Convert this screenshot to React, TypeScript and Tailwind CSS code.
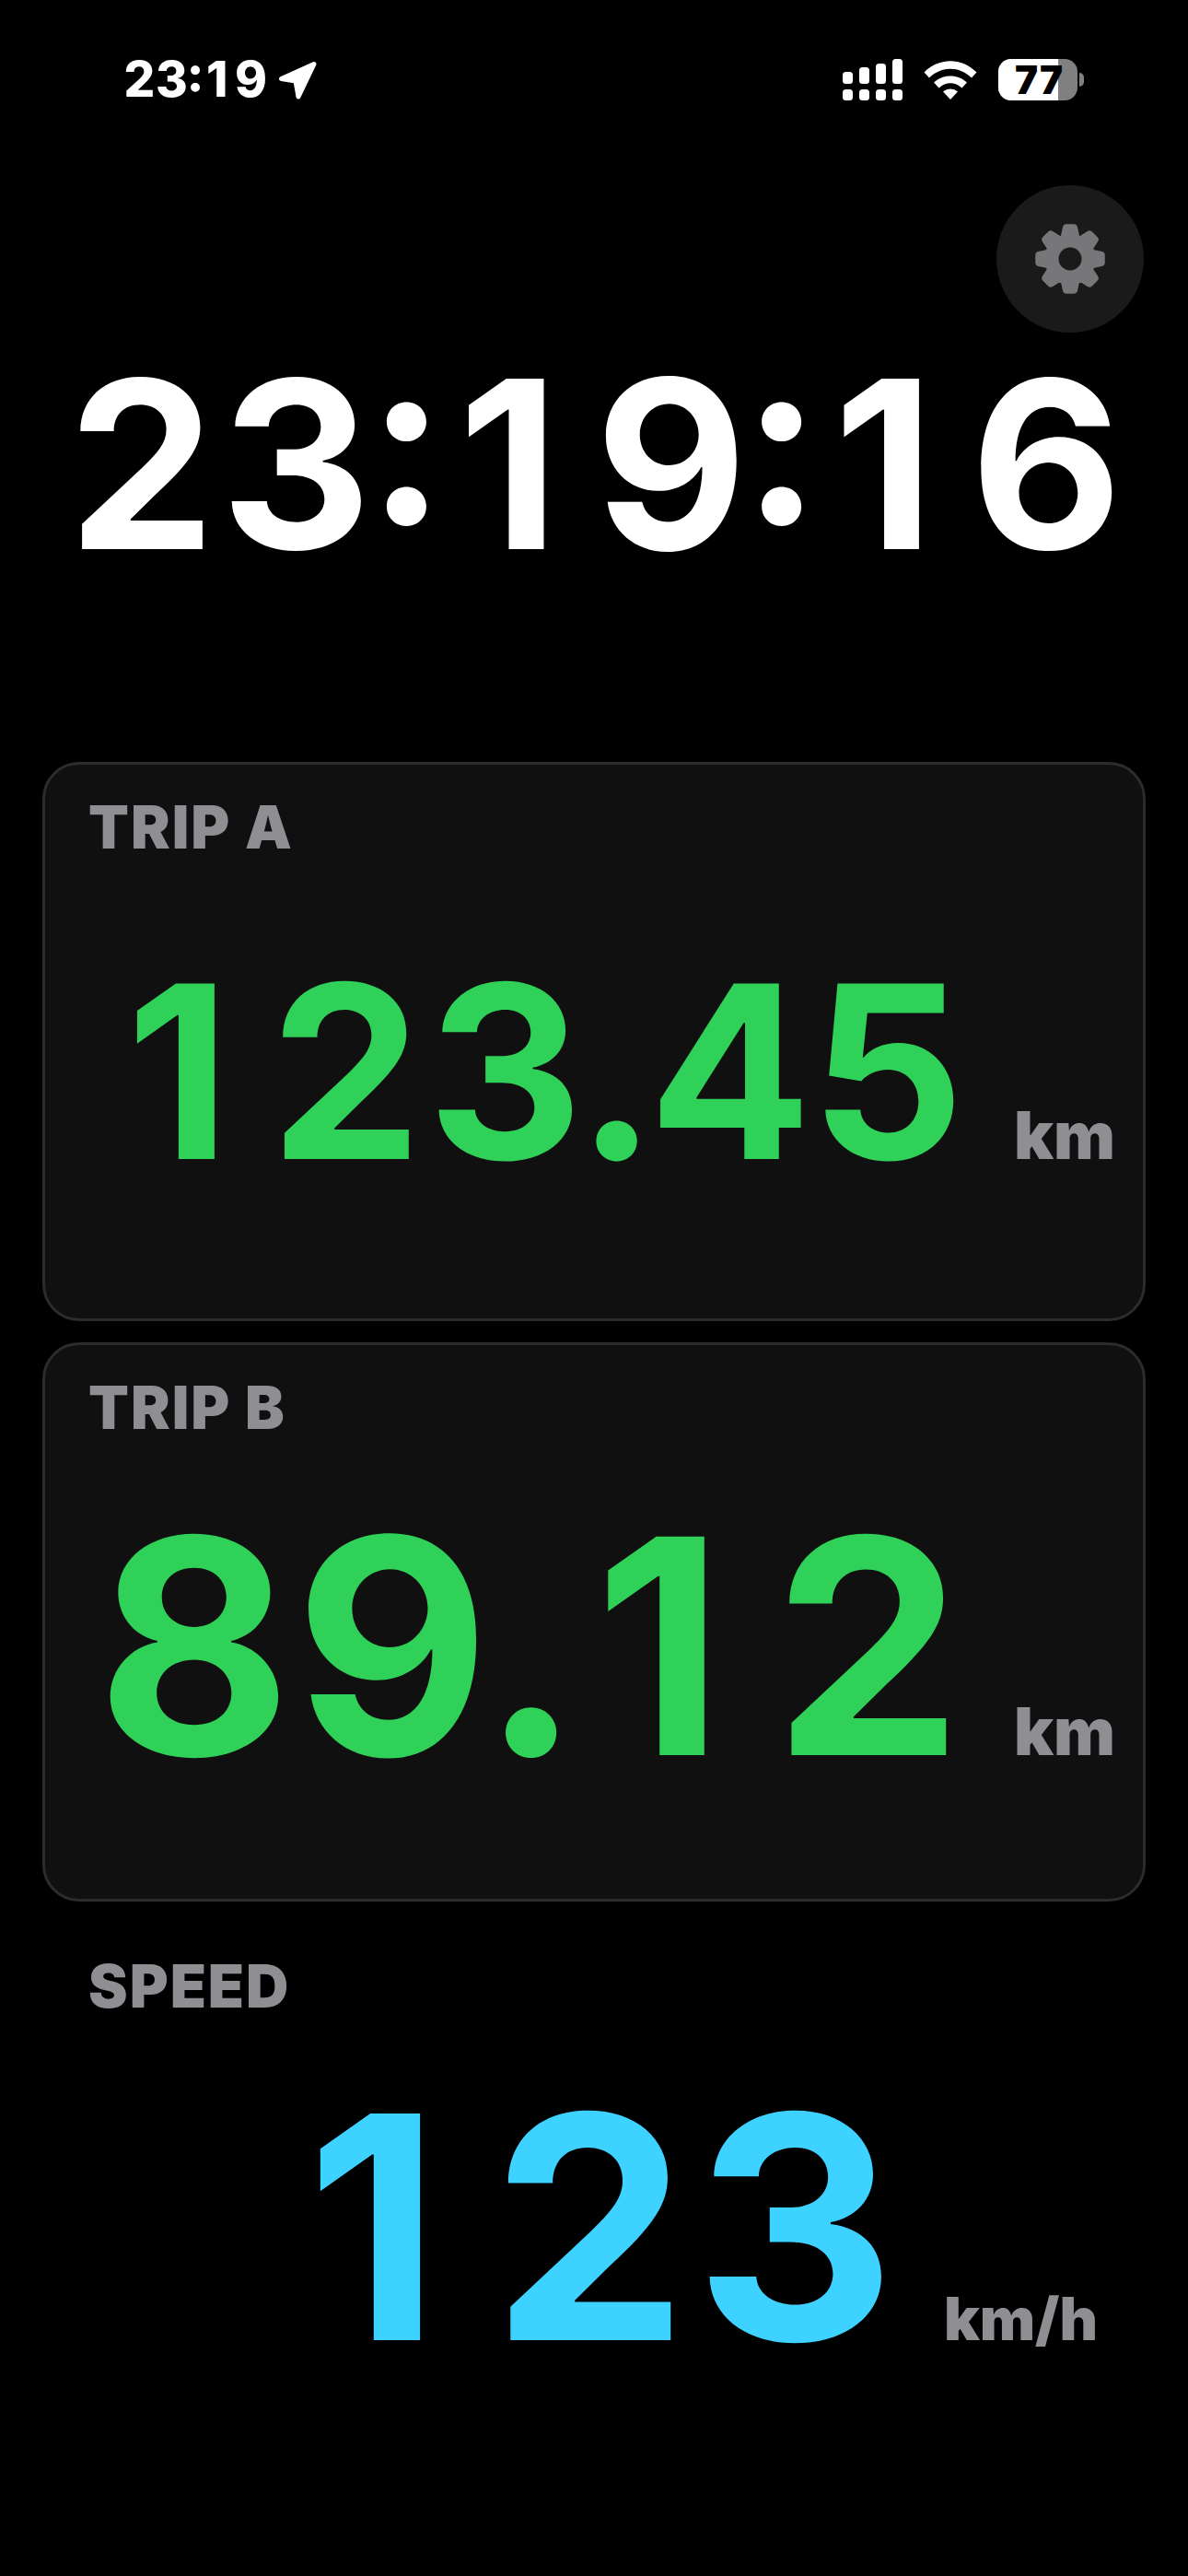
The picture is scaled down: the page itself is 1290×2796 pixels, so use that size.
import React from 'react';

const FONT = "font-['Inter','Liberation_Sans',sans-serif]";

// Fixed-pitch readout: every digit gets the same cell, but keeps the plain "1" shape.
// Separators sit tighter than their natural width.
const Figures: React.FC<{ text: string }> = ({ text }) => (
  <>
    {text.split('').map((ch, i) => {
      let cell = 'w-[0.66em] pr-[0.06em] tracking-[-0.06em] text-center';
      if (ch === '1') cell = 'w-[0.66em] pr-[0.13em] tracking-[-0.06em] text-center';
      if (ch === ':') cell = "tracking-[-0.05em] ml-[-0.025em] mr-[0.025em] [font-feature-settings:'case']";
      if (ch === '.') cell = 'tracking-[-0.07em] ml-[-0.035em] mr-[0.035em]';
      return (
        <span key={i} className={`inline-block ${cell}`}>
          {ch}
        </span>
      );
    })}
  </>
);

// 8-tooth cog outline, built from polar points
const gearPath = (() => {
  const teeth = 8;
  const pts: string[] = [];
  for (let i = 0; i < teeth; i++) {
    const a = (i * Math.PI * 2) / teeth - Math.PI / 2;
    const step = [
      [-0.27, 24],
      [-0.12, 34],
      [0.12, 34],
      [0.27, 24],
    ];
    for (const [da, r] of step) {
      const x = 40 + r * Math.cos(a + da);
      const y = 40 + r * Math.sin(a + da);
      pts.push(`${x.toFixed(2)} ${y.toFixed(2)}`);
    }
  }
  return 'M' + pts.join('L') + 'Z';
})();

const GearIcon = () => (
  <svg width="80" height="80" viewBox="0 0 80 80">
    <path d={gearPath} fill="#77777a" stroke="#77777a" strokeWidth="8" strokeLinejoin="round" />
    <circle cx="40" cy="40" r="12.5" fill="#1a1a1a" />
  </svg>
);

const LocationArrow = () => (
  <svg width="44" height="44" viewBox="0 0 44 44">
    <path d="M3.5 20.5 L39 4.5 L22 40 L19 23 Z" fill="#fff" stroke="#fff" strokeWidth="5" strokeLinejoin="round" />
  </svg>
);

const SignalIcon = () => (
  <svg width="65" height="46" viewBox="0 0 65 46">
    <rect x="0" y="14" width="11" height="13" rx="3.5" fill="#fff" />
    <rect x="18" y="9" width="11" height="18" rx="3.5" fill="#fff" />
    <rect x="36" y="5" width="11" height="22" rx="3.5" fill="#fff" />
    <rect x="54" y="0" width="11" height="27" rx="3.5" fill="#fff" />
    <rect x="0" y="33" width="11" height="12" rx="3.5" fill="#fff" />
    <rect x="18" y="33" width="11" height="12" rx="3.5" fill="#fff" />
    <rect x="36" y="33" width="11" height="12" rx="3.5" fill="#fff" />
    <rect x="54" y="33" width="11" height="12" rx="3.5" fill="#fff" />
  </svg>
);

const WifiIcon = () => (
  <svg width="58" height="42" viewBox="0 0 58 42">
    <path d="M0.5 12.5 C17 -4 41 -4 57.5 12.5 L52 18.5 C38.5 5.5 19.5 5.5 6 18.5 Z" fill="#fff" />
    <path d="M11 23.5 C21 14 37 14 47 23.5 L41.5 29.5 C34 22.5 24 22.5 16.5 29.5 Z" fill="#fff" />
    <path d="M21 33.5 C26 29.5 32 29.5 37 33.5 L29 42 Z" fill="#fff" />
  </svg>
);

const Battery = () => (
  <div className="flex items-center gap-[2px]">
    <div className="relative w-[86px] h-[45px] flex items-center">
      <div className="absolute inset-0 rounded-[14px] overflow-hidden bg-[#808080]">
        <div className="h-full w-[65px] bg-white" />
      </div>
      <span className={`relative ml-[17px] text-[42px] leading-none font-black tabular-nums text-black ${FONT}`}>
        77
      </span>
    </div>
    <div className="w-[5px] h-[15px] rounded-r-full bg-[#808080]" />
  </div>
);

const StatusBar = () => (
  <div className="flex justify-between items-center h-[45px] mt-[64px] pl-[134px] pr-[113px]">
    <div className="flex items-center gap-[12px]">
      <span className={`text-[53px] leading-none font-extrabold text-white ${FONT}`}>
        <Figures text="23:19" />
      </span>
      <LocationArrow />
    </div>
    <div className="flex items-center">
      <SignalIcon />
      <div className="ml-[23px] mr-[23px]">
        <WifiIcon />
      </div>
      <Battery />
    </div>
  </div>
);

interface TripCardProps {
  label: string;
  value: string;
  valueClass: string;
}

const TripCard: React.FC<TripCardProps> = ({ label, value, valueClass }) => (
  <div className="h-[607px] rounded-[40px] border-[3px] border-[#2c2c2e] bg-[#101011] flex flex-col">
    <div className={`pl-[47px] pt-[36px] text-[64px] leading-none tracking-[2px] font-black text-[#8e8e93] ${FONT}`}>
      {label}
    </div>
    <div className="flex-1 flex items-baseline justify-end pr-[30px] gap-[51px]">
      <span className={`font-bold leading-none text-[#30d158] ${FONT} ${valueClass}`}>
        <Figures text={value} />
      </span>
      <span className={`text-[71px] leading-none font-black text-[#8e8e93] ${FONT}`}>km</span>
    </div>
  </div>
);

const App: React.FC = () => {
  return (
    <div className="w-[1290px] h-[2796px] bg-black overflow-hidden">
      <StatusBar />
      <div className="flex justify-end pr-[48px] mt-[92px]">
        <button className="w-[160px] h-[160px] rounded-full bg-[#1a1a1a] flex items-center justify-center">
          <GearIcon />
        </button>
      </div>
      <div className={`mt-[16px] text-center text-[254px] leading-none font-bold text-white ${FONT}`}>
        <Figures text="23:19:16" />
      </div>
      <div className="mt-[196px] px-[46px] flex flex-col gap-[23px]">
        <TripCard label="TRIP A" value="123.45" valueClass="text-[262px] pt-[102px]" />
        <TripCard label="TRIP B" value="89.12" valueClass="text-[326px] pt-[64px]" />
      </div>
      <div className="pl-[96px] pr-[98px] pt-[60px]">
        <div className={`text-[64px] leading-none tracking-[2px] font-black text-[#8e8e93] ${FONT}`}>SPEED</div>
        <div className="flex items-baseline justify-end gap-[50px] mt-[61px]">
          <span className={`text-[338px] leading-none font-bold text-[#3dd2ff] ${FONT}`}>
            <Figures text="123" />
          </span>
          <span className={`text-[64px] leading-none font-black text-[#8e8e93] ${FONT}`}>km/h</span>
        </div>
      </div>
    </div>
  );
};

export default App;
